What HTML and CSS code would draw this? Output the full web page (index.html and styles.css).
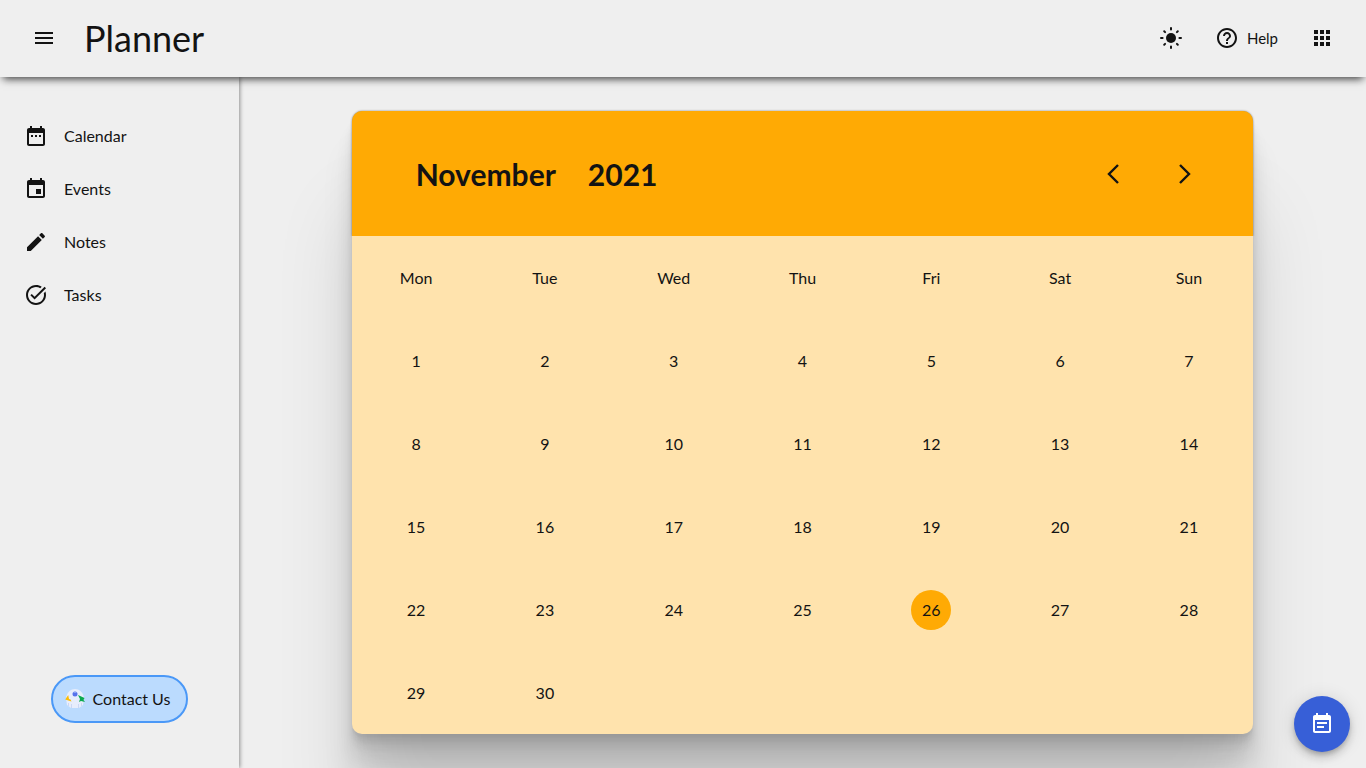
FILE: index.html
```html
<!DOCTYPE html>
<html lang="en">
<head>
<meta charset="utf-8">
<meta name="viewport" content="width=device-width, initial-scale=1">
<title>Planner</title>
<link rel="stylesheet" href="styles.css">
</head>
<body>
<header class="topbar">
  <button class="icon-button" type="button" aria-label="Menu"><svg class="icon" viewBox="0 0 24 24"><path d="M3 18h18v-2H3v2zm0-5h18v-2H3v2zm0-7v2h18V6H3z"/></svg></button>
  <h1 class="brand">Planner</h1>
  <div class="actions">
    <button class="icon-button" type="button" aria-label="Theme"><svg class="icon" viewBox="0 0 24 24"><circle cx="12" cy="12" r="5"/><path class="rays" d="M12 2v1.600M12 20.400V22M2 12h1.600M20.400 12H22M5.200 5.200l.9.900M17.900 17.900l.9.900M5.200 18.800l.9-.9M17.900 6.100l.9-.9"/></svg></button>
    <button class="help" type="button"><svg class="icon" viewBox="0 0 24 24"><path d="M11 18h2v-2h-2v2zm1-16C6.48 2 2 6.48 2 12s4.48 10 10 10 10-4.48 10-10S17.52 2 12 2zm0 18c-4.41 0-8-3.59-8-8s3.59-8 8-8 8 3.59 8 8-3.59 8-8 8zm0-14c-2.21 0-4 1.79-4 4h2c0-1.1.9-2 2-2s2 .9 2 2c0 2-3 1.75-3 5h2c0-2.25 3-2.5 3-5 0-2.21-1.79-4-4-4z"/></svg>Help</button>
    <button class="icon-button" type="button" aria-label="Apps"><svg class="icon" viewBox="0 0 24 24"><path d="M4 8h4V4H4v4zm6 12h4v-4h-4v4zm-6 0h4v-4H4v4zm0-6h4v-4H4v4zm6 0h4v-4h-4v4zm6-10v4h4V4h-4zm-6 4h4V4h-4v4zm6 6h4v-4h-4v4zm0 6h4v-4h-4v4z"/></svg></button>
  </div>
</header>
<div class="layout">
  <aside class="sidebar">
    <nav class="nav">
      <a class="nav-link" href="#calendar"><svg class="icon" viewBox="0 0 24 24"><path d="M9 11H7v2h2v-2zm4 0h-2v2h2v-2zm4 0h-2v2h2v-2zm2-7h-1V2h-2v2H8V2H6v2H5c-1.11 0-1.99.9-1.99 2L3 20c0 1.1.89 2 2 2h14c1.1 0 2-.9 2-2V6c0-1.1-.9-2-2-2zm0 16H5V9h14v11z"/></svg>Calendar</a>
      <a class="nav-link" href="#events"><svg class="icon" viewBox="0 0 24 24"><path d="M17 12h-5v5h5v-5zM16 1v2H8V1H6v2H5c-1.11 0-1.99.9-1.99 2L3 19c0 1.1.89 2 2 2h14c1.1 0 2-.9 2-2V5c0-1.1-.9-2-2-2h-1V1h-2zm3 18H5V8h14v11z"/></svg>Events</a>
      <a class="nav-link" href="#notes"><svg class="icon" viewBox="0 0 24 24"><path d="M3 17.25V21h3.75L17.81 9.94l-3.75-3.75L3 17.25zM20.71 7.04c.39-.39.39-1.02 0-1.41l-2.34-2.34c-.39-.39-1.02-.39-1.41 0l-1.83 1.83 3.75 3.75 1.83-1.83z"/></svg>Notes</a>
      <a class="nav-link" href="#tasks"><svg class="icon" viewBox="0 0 24 24"><path d="M22 5.18 10.59 16.6l-4.24-4.24 1.41-1.41 2.83 2.83 10-10L22 5.18zM19.79 10.22c.13.57.21 1.17.21 1.78 0 4.42-3.58 8-8 8s-8-3.58-8-8 3.58-8 8-8c1.58 0 3.04.46 4.28 1.25l1.44-1.44C16.1 2.67 14.13 2 12 2 6.48 2 2 6.48 2 12s4.48 10 10 10 10-4.48 10-10c0-1.19-.22-2.33-.6-3.39l-1.61 1.61z"/></svg>Tasks</a>
    </nav>
    <button class="contact" type="button"><svg class="contact-icon" viewBox="0 0 20 20"><path fill="#e7edfc" d="M1 9C2 3 6 0 10 0s8 3 9 9l-1 7-4 3H6l-4-3z"/><path fill="#fbbc05" d="M3.2 6 .2 10.500 6.500 12.500 5.500 10.500 4 10z"/><path fill="#0aaa50" d="M13 6l6.500 3-1 2 1.500 2-4-1-2 1 1-3z"/><circle cx="10" cy="5" r="2.500" fill="#5671ec"/><path fill="#8aa2f5" d="M8.500 3h3v1h-3z"/><path fill="#cbd8f4" d="M3 14h1v3H3zM6 15h1v4H6zM13 15h1v4h-1zM16 14h1v3h-1z"/></svg>Contact Us</button>
  </aside>
  <main class="content">
    <section class="calendar">
      <header class="calendar-head">
        <h2 class="period"><span>November</span><span>2021</span></h2>
        <div class="pager">
          <button class="icon-button" type="button" aria-label="Previous month"><svg class="icon arrow" viewBox="0 0 24 24"><path d="M17 3 8 12l9 9"/></svg></button>
          <button class="icon-button" type="button" aria-label="Next month"><svg class="icon arrow" viewBox="0 0 24 24"><path d="M7 3l9 9-9 9"/></svg></button>
        </div>
      </header>
      <table class="month">
        <thead><tr><th>Mon</th><th>Tue</th><th>Wed</th><th>Thu</th><th>Fri</th><th>Sat</th><th>Sun</th></tr></thead>
        <tbody>
          <tr><td>1</td><td>2</td><td>3</td><td>4</td><td>5</td><td>6</td><td>7</td></tr>
          <tr><td>8</td><td>9</td><td>10</td><td>11</td><td>12</td><td>13</td><td>14</td></tr>
          <tr><td>15</td><td>16</td><td>17</td><td>18</td><td>19</td><td>20</td><td>21</td></tr>
          <tr><td>22</td><td>23</td><td>24</td><td>25</td><td><span class="today">26</span></td><td>27</td><td>28</td></tr>
          <tr><td>29</td><td>30</td><td></td><td></td><td></td><td></td><td></td></tr>
        </tbody>
      </table>
    </section>
  </main>
</div>
<button class="fab" type="button" aria-label="Add event"><svg class="icon" viewBox="0 0 24 24"><path d="M17 10H7v2h10v-2zm2-7h-1V1h-2v2H8V1H6v2H5c-1.110 0-2 .9-2 2v14c0 1.100.89 2 2 2h14c1.100 0 2-.9 2-2V5c0-1.100-.9-2-2-2zm0 16H5V8h14v11zm-5-5H7v2h7v-2z"/></svg></button>
</body>
</html>
```
FILE: styles.css
```css
* {
  box-sizing: border-box;
}

body {
  margin: 0;
  height: 100vh;
  display: flex;
  flex-direction: column;
  overflow: hidden;
  background: #efefef;
  color: #131313;
  font: 16px/24px "Lato", sans-serif;
}

button {
  margin: 0;
  padding: 0;
  border: 0;
  background: none;
  color: inherit;
  font: inherit;
  cursor: pointer;
}

.icon {
  display: block;
  flex: none;
  width: 24px;
  height: 24px;
  fill: currentColor;
}

.icon-button {
  padding: 12px;
}

.rays {
  stroke: currentColor;
  stroke-width: 2;
  stroke-linecap: round;
}

.topbar {
  position: relative;
  z-index: 2;
  flex: none;
  display: flex;
  align-items: center;
  padding: 14px 20px 15px;
  background: #efefef;
  box-shadow: 0 5px 8px -3px rgba(0, 0, 0, 0.75);
}

.brand {
  margin: 0 0 0 16px;
  font-size: 36px;
  line-height: 40px;
  font-weight: 400;
}

.actions {
  margin-left: auto;
  display: flex;
  align-items: center;
  gap: 20px;
}

.help {
  display: flex;
  align-items: center;
  gap: 8px;
  font-size: 15px;
}

.layout {
  flex: 1;
  min-height: 0;
  display: flex;
}

.sidebar {
  position: relative;
  z-index: 1;
  flex: none;
  width: 239px;
  display: flex;
  flex-direction: column;
  justify-content: space-between;
  align-items: center;
  padding: 32px 0 45px;
  background: #efefef;
  box-shadow: 1px 0 4px rgba(0, 0, 0, 0.4);
}

.nav {
  align-self: stretch;
}

.nav-link {
  display: flex;
  align-items: center;
  gap: 16px;
  padding: 15px 24px 14px;
  color: inherit;
  text-decoration: none;
}

.contact {
  display: flex;
  align-items: center;
  gap: 8px;
  height: 48px;
  padding: 0 16px 0 12px;
  border: 2px solid #4a98f7;
  border-radius: 24px;
  background: #bbdbfe;
}

.contact-icon {
  width: 20px;
  height: 20px;
}

.content {
  flex: 1;
  display: flex;
  justify-content: center;
  align-items: flex-start;
  padding-top: 34px;
}

.calendar {
  width: 80%;
  border-radius: 10px;
  background: #ffe3ad;
  box-shadow:
    0 3px 2px rgba(0, 0, 0, 0.03),
    0 7px 5px rgba(0, 0, 0, 0.05),
    0 12px 10px rgba(0, 0, 0, 0.06),
    0 22px 18px rgba(0, 0, 0, 0.07),
    0 42px 33px rgba(0, 0, 0, 0.09),
    0 100px 80px rgba(0, 0, 0, 0.12);
}

.calendar-head {
  display: flex;
  align-items: center;
  justify-content: space-between;
  height: 125px;
  padding: 0 44px 0 64px;
  border-radius: 10px 10px 0 0;
  background: #ffaa04;
  box-shadow: 0 0 2px rgba(0, 0, 0, 0.5);
  clip-path: inset(-2px -2px 0 -2px);
}

.period {
  display: flex;
  gap: 32px;
  margin: 0;
  font-size: 30px;
  line-height: 40px;
  font-weight: 700;
}

.pager {
  display: flex;
  gap: 24px;
}

.arrow {
  fill: none;
  stroke: currentColor;
  stroke-width: 2.4;
}

.month {
  width: 100%;
  table-layout: fixed;
  border-collapse: collapse;
}

.month th,
.month td {
  height: 83px;
  padding: 0;
  text-align: center;
  vertical-align: middle;
  font-weight: 400;
}

.today {
  display: inline-block;
  width: 40px;
  border-radius: 50%;
  background: #ffaa04;
  line-height: 40px;
}

.fab {
  position: fixed;
  right: 16px;
  bottom: 16px;
  z-index: 3;
  display: grid;
  place-items: center;
  width: 56px;
  height: 56px;
  border-radius: 50%;
  background: #375fd7;
  color: #fff;
  box-shadow: 0 3px 5px -1px rgba(0, 0, 0, 0.2), 0 6px 10px rgba(0, 0, 0, 0.14), 0 1px 18px rgba(0, 0, 0, 0.12);
}
```
